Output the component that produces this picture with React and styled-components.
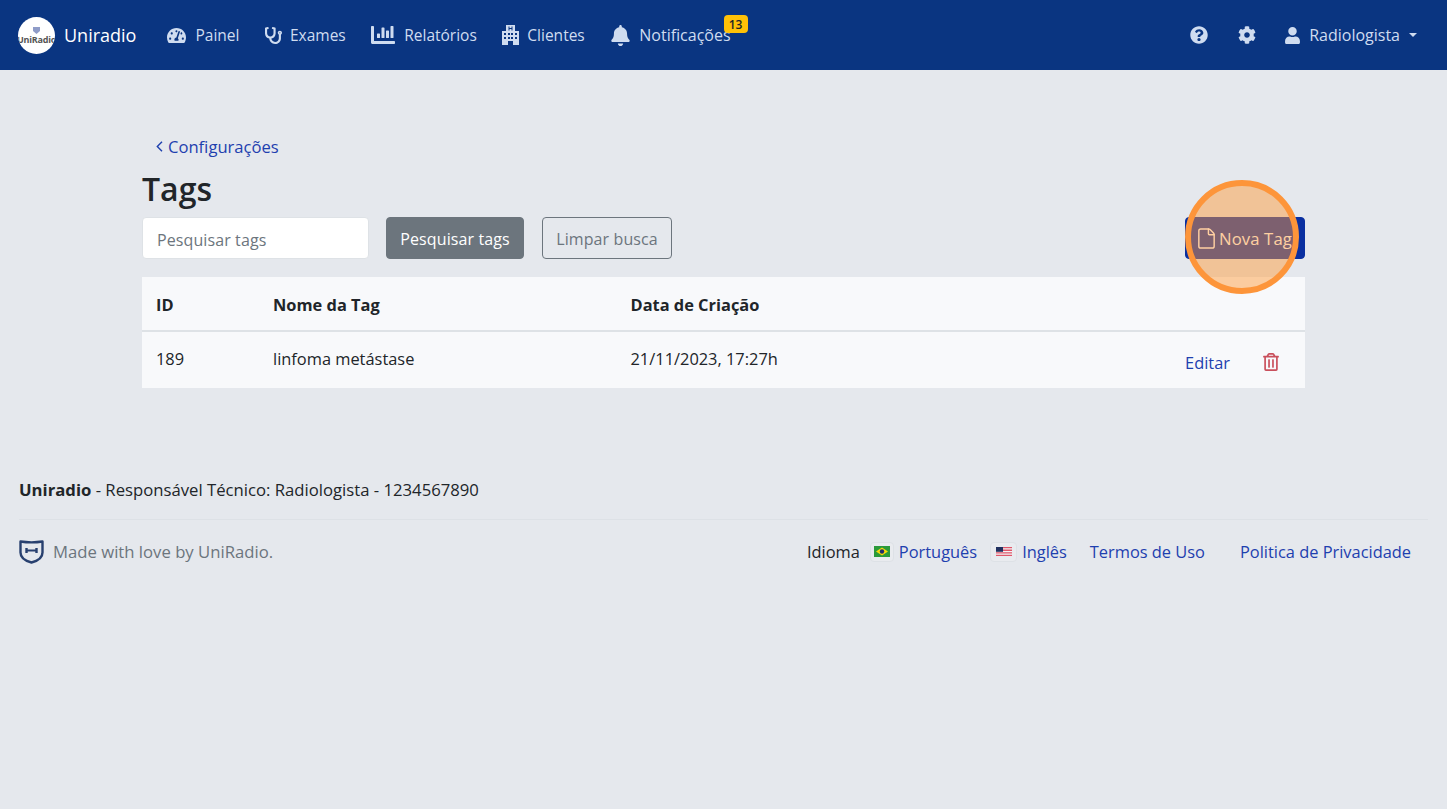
import styled, { createGlobalStyle } from 'styled-components';
import {
  FaTachometerAlt, FaStethoscope, FaChartBar, FaBell,
  FaQuestionCircle, FaCog, FaUser, FaRegTrashAlt,
} from 'react-icons/fa';
import { File } from 'lucide-react';

const Global = createGlobalStyle`
  html, body { margin: 0; padding: 0; }
  body {
    background: #e5e8ed;
    color: #212529;
    font-family: "Open Sans", "Noto Sans", "Liberation Sans", sans-serif;
    font-size: 16.4px;
    min-height: 809px;
  }
  a { text-decoration: none; }
`;

const Nav = styled.nav`
  height: 70px;
  background: #0a3581;
  display: flex;
  align-items: center;
  padding: 0 18px;
  box-sizing: border-box;
  color: #cfdcf0;
  font-size: 15.5px;
`;

const Brand = styled.a`
  display: flex;
  align-items: center;
  gap: 9px;
  color: #fff;
  font-size: 18px;
  margin-right: 31px;
`;

const LogoCircle = styled.span`
  width: 37px;
  height: 37px;
  border-radius: 50%;
  background: #fff;
  display: flex;
  flex-direction: column;
  align-items: center;
  justify-content: center;
  overflow: hidden;
  color: #555;
  font-size: 9px;
  font-weight: 700;
  letter-spacing: -0.2px;
  line-height: 9px;
  svg { margin-bottom: 1px; }
`;

const NavList = styled.div`
  display: flex;
  align-items: center;
  gap: 25.5px;
`;

const NavLink = styled.a`
  position: relative;
  display: flex;
  align-items: center;
  gap: ${p => p.$gap || 9}px;
  color: #cfdcf0;
  font-size: ${p => p.$size || 15.5}px;
  svg { font-size: ${p => p.$icon || 19}px; }
`;

const Badge = styled.span`
  position: absolute;
  top: -9px;
  right: -17px;
  width: 24px;
  height: 18px;
  border-radius: 4px;
  background: #ffc107;
  color: #212529;
  font-size: 12px;
  font-weight: 600;
  display: flex;
  align-items: center;
  justify-content: center;
`;

const NavRight = styled.div`
  margin-left: auto;
  display: flex;
  align-items: center;
  gap: 30px;
  padding-right: 12px;
  svg { font-size: 18px; display: block; }
`;

const UserMenu = styled.a`
  display: flex;
  align-items: center;
  gap: 8px;
  color: #cfdcf0;
  font-size: 16px;
  margin-left: -1.6px;
  svg { font-size: 17px; }
  &::after {
    content: "";
    margin-left: 1px;
    border-top: 4.8px solid #cfdcf0;
    border-left: 4.8px solid transparent;
    border-right: 4.8px solid transparent;
  }
`;

const Main = styled.main`
  width: 1163px;
  margin: 0 auto;
  padding-top: 64px;
`;

const BackLink = styled.a`
  display: flex;
  align-items: center;
  gap: 5px;
  height: 24px;
  padding-left: 14px;
  color: #1e40af;
  font-size: 16.6px;
`;

const Title = styled.h1`
  margin: 12px 0 0;
  font-size: 32px;
  line-height: 38px;
  font-weight: 600;
  color: #212529;
`;

const Toolbar = styled.div`
  display: flex;
  align-items: center;
  height: 42px;
  margin-top: 9px;
  font-size: 16px;
  letter-spacing: 0.1px;
`;

const SearchInput = styled.input`
  width: 227px;
  height: 42px;
  box-sizing: border-box;
  border: 1px solid #dee2e6;
  border-radius: 4px;
  background: #fff;
  padding: 3px 14px 0;
  font: inherit;
  letter-spacing: 0.1px;
  margin-right: 17px;
  &::placeholder { color: #6c757d; opacity: 1; }
`;

const Button = styled.button`
  height: 42px;
  width: ${p => p.$width}px;
  box-sizing: border-box;
  border-radius: 4px;
  font: inherit;
  font-size: ${p => (p.$primary ? 16.7 : 16)}px;
  letter-spacing: inherit;
  border: 1px solid ${p => (p.$outline ? '#6c757d' : p.$primary ? '#0a2fa0' : '#6c757d')};
  background: ${p => (p.$outline ? 'transparent' : p.$primary ? '#0a2fa0' : '#6c757d')};
  color: ${p => (p.$outline ? '#6c757d' : '#fff')};
  margin-right: ${p => p.$mr || 0}px;
  margin-left: ${p => (p.$primary ? 'auto' : 0)};
  display: flex;
  align-items: center;
  justify-content: center;
  gap: 4px;
  padding: 1px 0 0;
  svg { margin: 0 -3px; }
`;

const Table = styled.div`
  margin-top: 18px;
  background: #f8f9fb;
`;

const Row = styled.div`
  display: grid;
  grid-template-columns: 117px 357.5px 1fr auto;
  align-items: center;
  padding: ${p => (p.$head ? '2px 14px 0' : '0 14px 4px')};
  height: ${p => p.$height}px;
  font-weight: ${p => (p.$head ? 700 : 400)};
  border-bottom: ${p => (p.$head ? '2px solid #dee2e6' : 'none')};
  box-sizing: border-box;
`;

const Actions = styled.div`
  display: flex;
  align-items: center;
  gap: 32px;
  padding-right: 11px;
  padding-top: 8px;
  a { color: #1e40af; }
  svg { color: #c9505c; font-size: 18px; display: block; margin-top: -1px; }
`;

const Footer = styled.footer`
  margin-top: 90px;
  padding: 0 19px;
  font-size: 16.7px;
`;

const FooterTop = styled.div`
  height: 24px;
  line-height: 24px;
  padding-bottom: 17px;
  border-bottom: 1px solid #dde1e6;
`;

const FooterBottom = styled.div`
  display: flex;
  align-items: center;
  justify-content: space-between;
  padding-top: 19px;
  padding-right: 17px;
`;

const Made = styled.div`
  display: flex;
  align-items: center;
  gap: 9px;
  color: #6c757d;
`;

const FooterLinks = styled.div`
  display: flex;
  align-items: center;
  font-size: 16.4px;
`;

const FooterLink = styled.a`
  color: #1e40af;
  margin-left: ${p => p.$ml || 0}px;
`;

const FlagBox = styled.span`
  width: ${p => p.$width}px;
  height: 20px;
  margin: 0 5px 0 ${p => p.$ml || 0}px;
  box-sizing: border-box;
  border: 1px solid #dde1e6;
  border-radius: 4px;
  background: #e9ebef;
  display: flex;
  align-items: center;
  justify-content: center;
`;

const Highlight = styled.div`
  position: absolute;
  left: 1185px;
  top: 180px;
  width: 114px;
  height: 114px;
  box-sizing: border-box;
  border-radius: 50%;
  border: 6px solid #fd953a;
  background: rgba(255, 152, 56, 0.47);
`;

const BackChevron = () => (
  <svg width="7" height="11" viewBox="0 0 7 11" fill="none" stroke="#1e40af" strokeWidth="1.4">
    <path d="M6 .7 1.300 5.500 6 10.300" />
  </svg>
);

const HospitalIcon = () => (
  <svg width="17" height="20" viewBox="0 0 17 20" fill="currentColor">
    <path fillRule="evenodd" d="M4 0h9v6h4v14h-6v-4H6v4H0V6h4ZM6.500 1.500v4h1v-1.500h2v1.500h1v-4h-1v1.500h-2v-1.500ZM2 8v2h2V8Zm0 4v2h2v-2ZM6 8v2h2V8Zm3 0v2h2V8Zm4 0v2h2V8ZM6 12v2h2v-2Zm3 0v2h2v-2Zm4 0v2h2v-2Z" />
  </svg>
);

const BrazilFlag = () => (
  <svg width="16" height="11" viewBox="0 0 16 11">
    <rect width="16" height="11" fill="#2a9a3a" />
    <path d="M8 1.500 14 5.500 8 9.500 2 5.500Z" fill="#f5d90a" />
    <circle cx="8" cy="5.500" r="2.200" fill="#1f2f6b" />
  </svg>
);

const UsFlag = () => (
  <svg width="16" height="9" viewBox="0 0 16 9">
    <rect width="16" height="9" fill="#f3f3f5" />
    <path d="M0 0h16v1.300H0zM0 2.600h16v1.300H0zM0 5.200h16v1.300H0zM0 7.800h16V9H0z" fill="#e0566a" />
    <rect width="7" height="4.800" fill="#20305f" />
  </svg>
);

const Shield = () => (
  <svg width="25" height="25" viewBox="0 0 25 25" fill="none" stroke="#28406f">
    <path strokeWidth="2.400" strokeLinejoin="round" d="M1.500 2.500C8 3.500 17 3.500 23.500 2.500v11c0 5.500-5 8.500-11 10-6-1.500-11-4.500-11-10Z" />
    <path strokeWidth="2" d="M8 11.500h9" />
    <path strokeWidth="2.400" d="M7.500 9v5M17.500 9v5" />
  </svg>
);

export default function App() {
  return (
    <>
      <Global />
      <Nav>
        <Brand href="#">
          <LogoCircle>
            <svg width="7" height="7" viewBox="0 0 7 7"><path d="M0 0h7v4L3.500 7 0 4Z" fill="#8f9cc8" /></svg>
            UniRadio
          </LogoCircle>
          Uniradio
        </Brand>
        <NavList>
          <NavLink href="#"><FaTachometerAlt />Painel</NavLink>
          <NavLink href="#" $icon={17} $gap={8}><FaStethoscope />Exames</NavLink>
          <NavLink href="#" $icon={24}><FaChartBar />Relatórios</NavLink>
          <NavLink href="#" $gap={8}><HospitalIcon />Clientes</NavLink>
          <NavLink href="#" $icon={21} $gap={8} $size={16}><FaBell />Notificações<Badge>13</Badge></NavLink>
        </NavList>
        <NavRight>
          <FaQuestionCircle />
          <FaCog />
          <UserMenu href="#"><FaUser />Radiologista</UserMenu>
        </NavRight>
      </Nav>
      <Main>
        <BackLink href="#"><BackChevron />Configurações</BackLink>
        <Title>Tags</Title>
        <Toolbar>
          <SearchInput placeholder="Pesquisar tags" />
          <Button $width={138} $mr={18}>Pesquisar tags</Button>
          <Button $width={130} $outline>Limpar busca</Button>
          <Button $width={120} $primary><File size={23} strokeWidth={1.5} />Nova Tag</Button>
        </Toolbar>
        <Table>
          <Row $head $height={55}>
            <span>ID</span><span>Nome da Tag</span><span>Data de Criação</span><span />
          </Row>
          <Row $height={56}>
            <span>189</span><span>linfoma metástase</span><span>21/11/2023, 17:27h</span>
            <Actions><a href="#">Editar</a><FaRegTrashAlt /></Actions>
          </Row>
        </Table>
      </Main>
      <Footer>
        <FooterTop><b>Uniradio</b> - Responsável Técnico: Radiologista - 1234567890</FooterTop>
        <FooterBottom>
          <Made><Shield />Made with love by UniRadio.</Made>
          <FooterLinks>
            Idioma
            <FlagBox $ml={10} $width={24}><BrazilFlag /></FlagBox>
            <FooterLink href="#">Português</FooterLink>
            <FlagBox $ml={13} $width={27}><UsFlag /></FlagBox>
            <FooterLink href="#">Inglês</FooterLink>
            <FooterLink href="#" $ml={23}>Termos de Uso</FooterLink>
            <FooterLink href="#" $ml={35}>Politica de Privacidade</FooterLink>
          </FooterLinks>
        </FooterBottom>
      </Footer>
      <Highlight />
    </>
  );
}
